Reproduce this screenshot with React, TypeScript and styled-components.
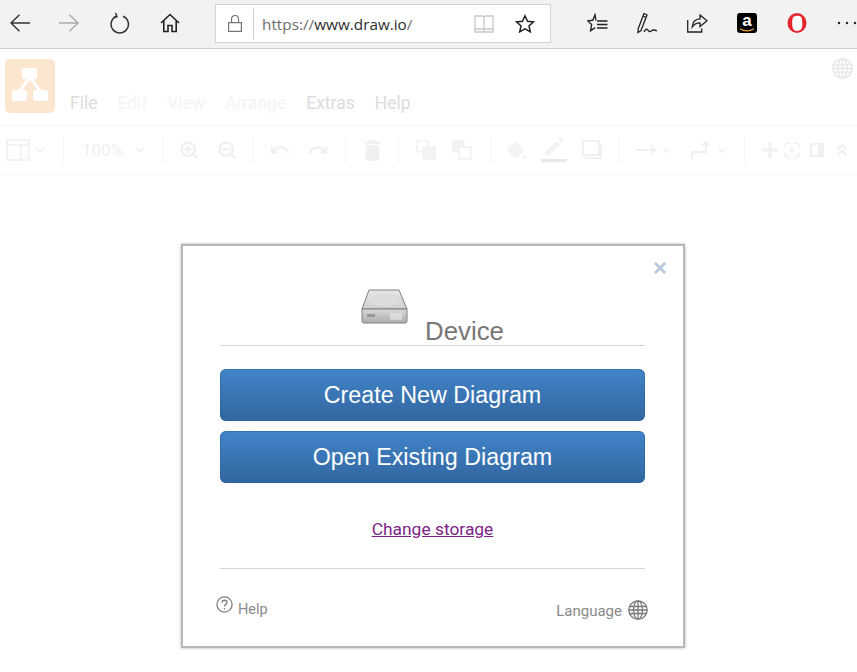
import React from "react";
import styled, { createGlobalStyle } from "styled-components";
import { ZoomIn, ZoomOut, ChevronDown, ChevronsUp, Plus, MoveRight } from "lucide-react";

const GlobalStyle = createGlobalStyle`
  html, body {
    margin: 0;
    padding: 0;
    background: #fff;
    font-family: "Liberation Sans", Arial, sans-serif;
  }
`;

const faint = "#f0f0f0";
const faintFill = "#f4f4f4";

const BackIcon = ({ color }: { color: string }) => (
  <svg width="20" height="18" viewBox="0 0 20 18" fill="none" stroke={color} strokeWidth="1.4">
    <path d="M20 9H1M9.5 .8 1 9l8.500 8.200" />
  </svg>
);

const ForwardIcon = ({ color }: { color: string }) => (
  <svg width="20" height="18" viewBox="0 0 20 18" fill="none" stroke={color} strokeWidth="1.400">
    <path d="M0 9h19M10.500 .8 19 9l-8.500 8.200" />
  </svg>
);

const RefreshIcon = () => (
  <svg width="20" height="22" viewBox="0 0 20 22" fill="none" stroke="#333" strokeWidth="1.500">
    <path d="M13 4.200a8.700 8.700 0 1 1-6.500 0" />
    <path d="M5.500 1 7 4.500 3.600 5.800" />
  </svg>
);

const HomeIcon = () => (
  <svg width="20" height="20" viewBox="0 0 20 20" fill="none" stroke="#222" strokeWidth="1.600">
    <path d="M1 10 10 1.500 19 10M3.800 8v10.500h4.200v-6h4v6h4.200V8" />
  </svg>
);

const LockIcon = () => (
  <svg width="14" height="17" viewBox="0 0 14 17" fill="none" stroke="#777" strokeWidth="1.200">
    <path d="M.6 7.600h12.800v8.800H.6zM3.500 7.500V4a3.500 3.500 0 0 1 7 0v3.500" />
  </svg>
);

const BookIcon = () => (
  <svg width="20" height="18" viewBox="0 0 20 18" fill="none" stroke="#c9c9c9" strokeWidth="1.300">
    <path d="M1 1h7a2 2 0 0 1 2 2v12a2 2 0 0 0-2-1H1zM19 1h-7a2 2 0 0 0-2 2v12a2 2 0 0 1 2-1h7z" />
    <path d="M1 14v3h18v-3" />
  </svg>
);

const StarIcon = () => (
  <svg width="20" height="19" viewBox="0 0 20 19" fill="none" stroke="#222" strokeWidth="1.500">
    <path d="m10 1.800 2.500 5.500 6 .6-4.500 4 1.300 5.900L10 14.800l-5.300 3 1.300-5.900-4.500-4 6-.6z" />
  </svg>
);

const FavoritesIcon = () => (
  <svg width="21" height="20" viewBox="0 0 21 20" fill="none" stroke="#222" strokeWidth="1.400">
    <path d="M9 7.500 8 1.800 5.800 7.300l-5 .6 3.800 3.600-1 6.200 4.600-3" />
    <path d="M10 8h10.500M10 11.500h10.500M10 15h10.500" />
  </svg>
);

const PenIcon = () => (
  <svg width="21" height="22" viewBox="0 0 21 22" fill="none" stroke="#222" strokeWidth="1.300">
    <path d="M7 1.500 10 3 4 18.500 1 20.500l.2-3.800zM6 4l3 1.500" />
    <path d="M7 20c1.500-3 2.500-3.500 3.800-2 1.400 1.600 2.200 2.400 3.700.8 1.500-1.600 3-1 5.500 0" />
  </svg>
);

const ShareIcon = () => (
  <svg width="21" height="19" viewBox="0 0 21 19" fill="none" stroke="#222" strokeWidth="1.300">
    <path d="M.7 6v12h14v-3.500" />
    <path d="M13 1v3.800C8 5 5.600 8 5.200 13c2-3 4-4.200 7.800-4.200v3.800L20 6.800z" />
  </svg>
);

const AmazonIcon = () => (
  <AmazonBadge>
    <AmazonLetter>a</AmazonLetter>
    <svg width="16" height="4" viewBox="0 0 16 4" fill="none" stroke="#f0a030" strokeWidth="1.200">
      <path d="M1 .8c4 2.600 9.500 2.600 14 0" />
    </svg>
  </AmazonBadge>
);

const OperaIcon = () => (
  <svg width="20" height="22" viewBox="0 0 20 22">
    <ellipse cx="10" cy="11" rx="9.500" ry="10" fill="#e2262c" />
    <path d="M6 5.500c1-2 7-2.500 8.500 0 .8 2 1 7.500.5 10-.5 2.300-2.800 3.500-5 3.500s-4-1.500-4.500-4C5 12 5 8 6 5.500z" fill="#fff" />
  </svg>
);

const MoreIcon = () => (
  <svg width="20" height="4" viewBox="0 0 20 4" fill="#222">
    <circle cx="2" cy="2" r="1.200" />
    <circle cx="10" cy="2" r="1.200" />
    <circle cx="18" cy="2" r="1.200" />
  </svg>
);

const LogoIcon = () => (
  <svg width="50" height="54" viewBox="0 0 50 54">
    <path d="M25 18 12 36M25 18l13 18" stroke="#fff" strokeWidth="3" />
    <rect x="17" y="9" width="15" height="11" rx="2" fill="#fff" />
    <rect x="7" y="31" width="15" height="11" rx="2" fill="#fff" />
    <rect x="28" y="31" width="15" height="11" rx="2" fill="#fff" />
  </svg>
);

const GlobeIcon = ({ size, color }: { size: number; color: string }) => (
  <svg width={size} height={size} viewBox="0 0 20 20" fill="none" stroke={color} strokeWidth="1.300">
    <circle cx="10" cy="10" r="9.200" />
    <ellipse cx="10" cy="10" rx="4.500" ry="9.200" />
    <path d="M10 .8v18.400M1.500 6.500h17M1.500 13.500h17M.8 10h18.400" />
  </svg>
);

const PanelIcon = () => (
  <svg width="24" height="22" viewBox="0 0 24 22" fill="none" stroke={faint} strokeWidth="1.600">
    <path d="M1 1h22v20H1zM1 6h22M15 6v15" />
  </svg>
);

const MaterialIcon = ({ d, size }: { d: string; size: number }) => (
  <svg width={size} height={size} viewBox="0 0 24 24" fill={faint}>
    <path d={d} />
  </svg>
);

const undoPath =
  "M12.5 8c-2.650 0-5.050.99-6.900 2.600L2 7v9h9l-3.620-3.620c1.390-1.160 3.160-1.880 5.120-1.880 3.540 0 6.550 2.310 7.600 5.500l2.370-.78C21.080 11.030 17.150 8 12.500 8z";
const redoPath =
  "M18.400 10.600C16.550 8.990 14.150 8 11.500 8c-4.650 0-8.580 3.030-9.960 7.220L3.900 16c1.050-3.190 4.050-5.500 7.600-5.500 1.950 0 3.730.72 5.120 1.880L13 16h9V7l-3.600 3.600z";
const trashPath =
  "M6 19c0 1.100.9 2 2 2h8c1.100 0 2-.9 2-2V7H6v12zM19 4h-3.500l-1-1h-5l-1 1H5v2h14V4z";
const fitPath =
  "M5 15H3v4c0 1.100.9 2 2 2h4v-2H5v-4zM5 5h4V3H5c-1.100 0-2 .9-2 2v4h2V5zm14-2h-4v2h4v4h2V5c0-1.100-.9-2-2-2zm0 16h-4v2h4c1.100 0 2-.9 2-2v-4h-2v4zM12 9c-1.660 0-3 1.340-3 3s1.340 3 3 3 3-1.340 3-3-1.340-3-3-3z";

const StackFrontIcon = ({ back }: { back?: boolean }) => (
  <svg width="20" height="20" viewBox="0 0 22 22" fill="none" stroke={faint} strokeWidth="1.500">
    <path d="M1 1h12v12H1z" fill={back ? faintFill : "none"} />
    <path d="M8 8h13v13H8z" fill={back ? "#fff" : faintFill} />
  </svg>
);

const FillIcon = () => (
  <svg width="22" height="19" viewBox="0 0 24 20" fill={faintFill}>
    <path d="M11 0 21 10l-8 8a2 2 0 0 1-3 0L3 11c-1-1-1-2 0-3z" />
    <path d="m21 13 2.500 4a2.500 2.500 0 1 1-5 0z" />
  </svg>
);

const LineColorIcon = () => (
  <svg width="26" height="26" viewBox="0 0 26 26" fill={faintFill}>
    <path d="M4 15 15 4l4 4L8 19H4zM17 2l2-2 4 4-2 2z" />
    <rect y="22" width="26" height="3" fill="#e8e8e8" />
  </svg>
);

const ShadowIcon = () => (
  <svg width="20" height="20" viewBox="0 0 20 20" fill="none" stroke={faint} strokeWidth="2">
    <path d="M1 1h16v14H1z" />
    <path d="M3 18h16V4" />
  </svg>
);

const WaypointIcon = () => (
  <svg width="20" height="20" viewBox="0 0 20 20" fill="none" stroke={faint} strokeWidth="1.800">
    <path d="M1 20v-8h14V3M11 6l4-4 4 4" />
  </svg>
);

const FormatPanelIcon = () => (
  <svg width="14" height="14" viewBox="0 0 14 14" fill={faint}>
    <path d="M0 0h14v14H0zM2 2v10h6V2z" fillRule="evenodd" />
  </svg>
);

const HelpCircleIcon = () => (
  <svg width="17" height="17" viewBox="0 0 17 17" fill="none" stroke="#808080" strokeWidth="1.300">
    <circle cx="8.500" cy="8.500" r="7.600" />
    <path d="M6 6.500c0-3 5-3 5 0 0 2-2.500 1.800-2.500 4M8.500 12v1.500" />
  </svg>
);

const DriveIcon = () => (
  <svg width="47" height="36" viewBox="0 0 47 36">
    <defs>
      <linearGradient id="driveTop" x1="0" y1="0" x2="0" y2="1">
        <stop offset="0" stopColor="#e6e6e6" />
        <stop offset="1" stopColor="#cfcfcf" />
      </linearGradient>
      <linearGradient id="driveFront" x1="0" y1="0" x2="0" y2="1">
        <stop offset="0" stopColor="#d8d8d8" />
        <stop offset="1" stopColor="#adadad" />
      </linearGradient>
    </defs>
    <path d="M8 1h30l8 19H1z" fill="url(#driveTop)" stroke="#808080" />
    <ellipse cx="23.500" cy="11" rx="15" ry="6.500" fill="#dcdcdc" />
    <path d="M1 20h45v12a2 2 0 0 1-2 2H3a2 2 0 0 1-2-2z" fill="url(#driveFront)" stroke="#808080" />
    <rect x="6" y="25" width="8" height="3" fill="#999" />
    <path d="M30 24v7M32 24v7M34 24v7M36 24v7M38 24v7M40 24v7" stroke="#f2f2f2" strokeWidth="1" />
  </svg>
);

const App = () => {
  return (
    <Page>
      <GlobalStyle />
      <BrowserBar>
        <NavButton $w={40}><BackIcon color="#333" /></NavButton>
        <NavButton $w={58}><ForwardIcon color="#aaa" /></NavButton>
        <NavButton $w={44}><RefreshIcon /></NavButton>
        <NavButton $w={56}><HomeIcon /></NavButton>
        <AddressBox>
          <LockSlot><LockIcon /></LockSlot>
          <Url>
            https://<UrlHost>www.draw.io</UrlHost>/
          </Url>
          <BookSlot><BookIcon /></BookSlot>
          <StarSlot><StarIcon /></StarSlot>
        </AddressBox>
        <Extensions>
          <NavButton $w={50}><FavoritesIcon /></NavButton>
          <NavButton $w={50}><PenIcon /></NavButton>
          <NavButton $w={50}><ShareIcon /></NavButton>
          <NavButton $w={50}><AmazonIcon /></NavButton>
          <NavButton $w={50}><OperaIcon /></NavButton>
          <NavButton $w={50}><MoreIcon /></NavButton>
        </Extensions>
      </BrowserBar>

      <AppHeader>
        <Logo><LogoIcon /></Logo>
        <Menu>
          <MenuItem $enabled>File</MenuItem>
          <MenuItem>Edit</MenuItem>
          <MenuItem>View</MenuItem>
          <MenuItem>Arrange</MenuItem>
          <MenuItem $enabled>Extras</MenuItem>
          <MenuItem $enabled>Help</MenuItem>
        </Menu>
        <HeaderGlobe><GlobeIcon size={21} color="#e6e6e6" /></HeaderGlobe>
      </AppHeader>

      <Toolbar>
        <Tool $w={24}><PanelIcon /></Tool>
        <Tool $w={20}><ChevronDown size={14} color={faint} strokeWidth={3} /></Tool>
        <Sep $before={13} />
        <ZoomValue>100%</ZoomValue>
        <Tool $w={32}><ChevronDown size={14} color={faint} strokeWidth={3} /></Tool>
        <Sep $before={6} />
        <Tool $w={38} $before={7}><ZoomIn size={20} color={faint} strokeWidth={3} /></Tool>
        <Tool $w={38}><ZoomOut size={20} color={faint} strokeWidth={3} /></Tool>
        <Sep $before={7} />
        <Tool $w={38} $before={7}><MaterialIcon d={undoPath} size={22} /></Tool>
        <Tool $w={38}><MaterialIcon d={redoPath} size={22} /></Tool>
        <Sep $before={8} />
        <Tool $w={38} $before={7}><MaterialIcon d={trashPath} size={27} /></Tool>
        <Sep $before={7} />
        <Tool $w={36} $before={9}><StackFrontIcon /></Tool>
        <Tool $w={36}><StackFrontIcon back /></Tool>
        <Sep $before={10} />
        <Tool $w={38} $before={6}><FillIcon /></Tool>
        <Tool $w={38}><LineColorIcon /></Tool>
        <Tool $w={38}><ShadowIcon /></Tool>
        <Sep $before={7} />
        <Tool $w={30} $before={12}><MoveRight size={22} color={faint} strokeWidth={2} /></Tool>
        <Tool $w={12}><ChevronDown size={13} color={faint} strokeWidth={3} /></Tool>
        <Tool $w={24} $before={16}><WaypointIcon /></Tool>
        <Tool $w={18}><ChevronDown size={13} color={faint} strokeWidth={3} /></Tool>
        <Sep $before={13} />
        <Tool $w={24} $before={13}><Plus size={22} color={faint} strokeWidth={3.500} /></Tool>
        <Tool $w={20}><MaterialIcon d={fitPath} size={20} /></Tool>
        <Tool $w={30}><FormatPanelIcon /></Tool>
        <Tool $w={20}><ChevronsUp size={20} color={faint} strokeWidth={2.500} /></Tool>
      </Toolbar>

      <Dialog>
        <CloseMark>×</CloseMark>
        <DialogTitle>
          <DriveIcon />
          <TitleText>Device</TitleText>
        </DialogTitle>
        <ActionButton $first>Create New Diagram</ActionButton>
        <ActionButton>Open Existing Diagram</ActionButton>
        <StorageLink href="#">Change storage</StorageLink>
        <FooterRule />
        <DialogFooter>
          <FooterLink>
            <HelpGlyph><HelpCircleIcon /></HelpGlyph>
            <HelpLabel>Help</HelpLabel>
          </FooterLink>
          <LanguageLink>
            <LanguageLabel>Language</LanguageLabel>
            <GlobeIcon size={20} color="#7a7a7a" />
          </LanguageLink>
        </DialogFooter>
      </Dialog>
    </Page>
  );
};

export default App;

const Page = styled.div`
  position: relative;
  width: 857px;
  height: 672px;
  overflow: hidden;
  background: #fff;
`;

const BrowserBar = styled.div`
  box-sizing: border-box;
  display: flex;
  align-items: flex-start;
  height: 49px;
  background: #f2f2f2;
  border-bottom: 1px solid #cfcfcf;
`;

const NavButton = styled.div<{ $w: number }>`
  display: flex;
  align-items: center;
  justify-content: center;
  flex: none;
  width: ${(p) => p.$w}px;
  height: 46px;
`;

const AddressBox = styled.div`
  box-sizing: border-box;
  display: flex;
  align-items: center;
  flex: none;
  width: 336px;
  height: 39px;
  margin: 4px 0 0 17px;
  background: #fff;
  border: 1px solid #d2d2d2;
`;

const LockSlot = styled.div`
  box-sizing: border-box;
  display: flex;
  align-items: center;
  justify-content: center;
  flex: none;
  width: 38px;
  height: 30px;
  border-right: 1px solid #cfcfcf;
`;

const Url = styled.div`
  flex: 1;
  padding-left: 8px;
  font-family: "Open Sans", sans-serif;
  font-size: 15.300px;
  color: #6c6c6c;
`;

const UrlHost = styled.span`
  color: #2b2b2b;
`;

const BookSlot = styled.div`
  display: flex;
  flex: none;
  margin-right: 21px;
`;

const StarSlot = styled.div`
  display: flex;
  flex: none;
  margin-right: 15px;
`;

const Extensions = styled.div`
  display: flex;
  flex: none;
  margin-left: 21px;
`;

const AmazonBadge = styled.div`
  position: relative;
  display: flex;
  flex-direction: column;
  align-items: center;
  box-sizing: border-box;
  width: 20px;
  height: 20px;
  padding-top: 1px;
  background: #000;
  border-radius: 3px;
`;

const AmazonLetter = styled.span`
  height: 14px;
  font-size: 17px;
  font-weight: 700;
  line-height: 13px;
  color: #fff;
`;

const AppHeader = styled.div`
  position: relative;
  box-sizing: border-box;
  display: flex;
  align-items: flex-start;
  height: 77px;
  padding: 10px 0 0 5px;
  border-bottom: 1px solid #f8f8f8;
`;

const Logo = styled.div`
  display: flex;
  flex: none;
  width: 50px;
  height: 54px;
  background: #fde6cf;
  border-radius: 5px;
`;

const Menu = styled.div`
  display: flex;
  gap: 20px;
  margin: 32px 0 0 15px;
`;

const MenuItem = styled.span<{ $enabled?: boolean }>`
  font-family: Roboto, sans-serif;
  font-size: 17.500px;
  line-height: 24px;
  color: ${(p) => (p.$enabled ? "#dcdcdc" : "#f4f4f4")};
`;

const HeaderGlobe = styled.div`
  position: absolute;
  top: 9px;
  right: 4px;
  display: flex;
`;

const Toolbar = styled.div`
  box-sizing: border-box;
  display: flex;
  align-items: center;
  height: 49px;
  padding-left: 6px;
  border-bottom: 1px solid #f8f8f8;
`;

const Tool = styled.div<{ $w: number; $before?: number }>`
  display: flex;
  align-items: center;
  justify-content: center;
  flex: none;
  width: ${(p) => p.$w}px;
  margin-left: ${(p) => p.$before ?? 0}px;
`;

const Sep = styled.div<{ $before: number }>`
  flex: none;
  width: 1px;
  height: 28px;
  margin-left: ${(p) => p.$before}px;
  background: #f6f6f6;
`;

const ZoomValue = styled.span`
  flex: none;
  width: 42px;
  margin-left: 18px;
  font-family: Roboto, sans-serif;
  font-size: 17px;
  color: ${faint};
`;

const Dialog = styled.div`
  position: absolute;
  top: 244px;
  left: 181px;
  box-sizing: border-box;
  display: flex;
  flex-direction: column;
  width: 504px;
  height: 404px;
  padding: 0 38px 0 37px;
  background: #fff;
  border: 2px solid #b8b8b8;
  box-shadow: 0 0 3px rgba(0, 0, 0, 0.3);
`;

const CloseMark = styled.span`
  position: absolute;
  top: 10px;
  right: 16px;
  font-size: 24px;
  font-weight: 700;
  line-height: 24px;
  color: #b9c7d9;
`;

const DialogTitle = styled.div`
  box-sizing: border-box;
  display: flex;
  align-items: flex-start;
  justify-content: center;
  gap: 17px;
  flex: none;
  height: 100px;
  padding-top: 43px;
  border-bottom: 1px solid #d4d4d4;
`;

const TitleText = styled.span`
  margin-top: 27px;
  font-size: 25.800px;
  line-height: 30px;
  color: #777;
`;

const ActionButton = styled.button<{ $first?: boolean }>`
  box-sizing: border-box;
  flex: none;
  width: 425px;
  height: 52px;
  margin-top: ${(p) => (p.$first ? 23 : 10)}px;
  padding: 0;
  font-family: "Liberation Sans", Arial, sans-serif;
  font-size: 23.300px;
  color: #fff;
  background: linear-gradient(#4284c9, #31669f);
  border: none;
  border-radius: 6px;
  box-shadow: inset 0 0 0 1px rgba(40, 95, 160, 0.5);
`;

const StorageLink = styled.a`
  align-self: center;
  margin-top: 35px;
  font-family: Roboto, sans-serif;
  font-size: 17.400px;
  line-height: 22px;
  color: #7d1f87;
`;

const FooterRule = styled.div`
  flex: none;
  height: 1px;
  margin-top: 28px;
  background: #d4d4d4;
`;

const DialogFooter = styled.div`
  display: flex;
  align-items: flex-start;
  justify-content: space-between;
  margin: 27px -3px 0 -4px;
`;

const FooterLink = styled.div`
  display: flex;
  align-items: center;
  gap: 5px;
`;

const LanguageLink = styled.div`
  display: flex;
  align-items: center;
  gap: 6px;
  margin-top: 4px;
`;

const HelpGlyph = styled.span`
  display: flex;
  margin-bottom: 9px;
`;

const HelpLabel = styled.span`
  font-family: Roboto, sans-serif;
  font-size: 14.500px;
  color: #8a8a8a;
`;

const LanguageLabel = styled.span`
  margin-top: 2px;
  font-family: Roboto, sans-serif;
  font-size: 15px;
  color: #8a8a8a;
`;
